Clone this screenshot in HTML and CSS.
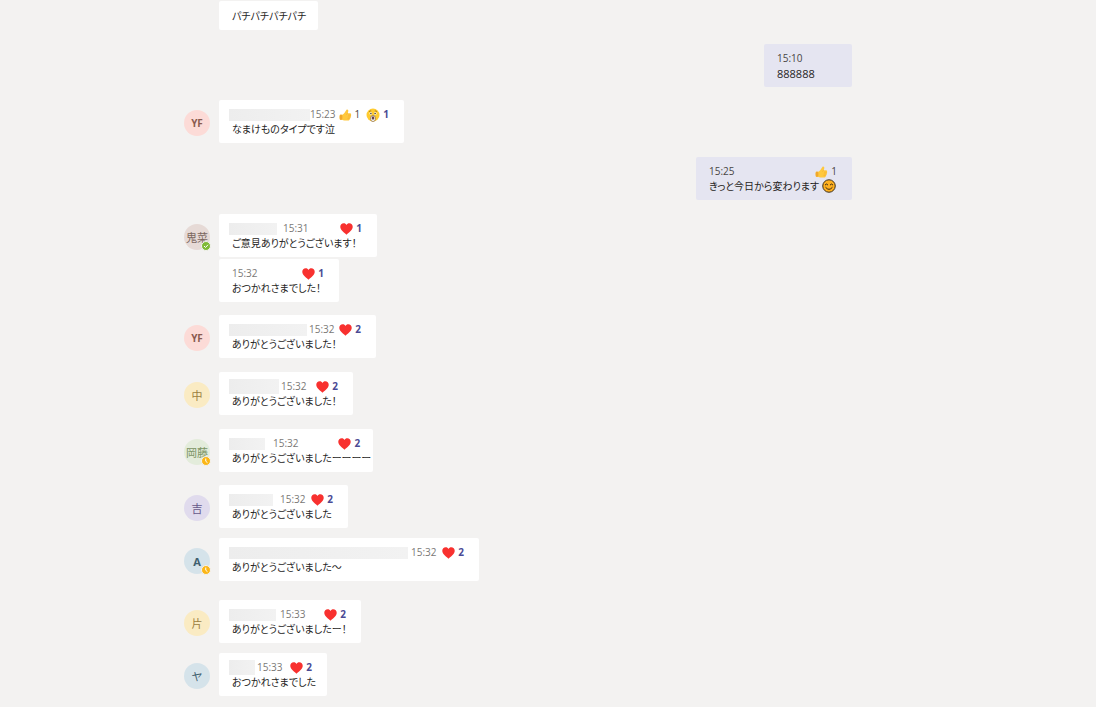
FILE: index.html
```
<!DOCTYPE html>
<html lang="ja">
<head>
    <meta charset="utf-8">
    <title>Chat</title>
    <link rel="stylesheet" href="styles.css">
</head>
<body>
    <svg class="sprite" aria-hidden="true">
        <symbol id="heart" viewBox="0 0 24 22">
            <path fill="#f8312f" d="M12 21.5C9 19 1 14 .5 7.500C.2 3 3.500.5 6.800.5C9.200.5 11 1.800 12 3.500C13 1.800 14.800.5 17.200.5C20.500.5 23.800 3 23.500 7.500C23 14 15 19 12 21.500Z"/>
        </symbol>
        <symbol id="thumb" viewBox="0 0 24 24">
            <path fill="#ffc83d" d="M14.500 1C16.500.3 18 2 17.500 4.500L16.500 8.500H21C23.500 8.500 24 11 22.700 12.200C23.800 13.500 23.400 15.300 22 16C22.600 17.500 21.800 19 20.500 19.400C20.600 21.500 19.500 23 17 23H10C8 23 6.500 22.200 5 21.500L1 21.500C0 18 0 14 1 11.500H5.500C8 10.500 11 7 12 4.500Z"/>
            <path fill="#f0a82c" d="M1 11.500H5C6 14.500 6 18 5 21.500H1C0 18 0 14 1 11.500Z"/>
            <path fill="none" stroke="#eda52b" d="M16.500 8.500L13.500 11M17 12.300H22.500M16.500 16H22M16 19.400H20.500"/>
        </symbol>
        <symbol id="surprised" viewBox="0 0 28 28">
            <circle cx="14" cy="14" r="13" fill="#ffcb2f"/>
            <path fill="none" stroke="#9a6a16" stroke-width="1.500" d="M6 7.500Q8 5 10.500 6M17.500 6Q20 5 22 7.500"/>
            <circle cx="9.500" cy="11" r="2.500" fill="#fff"/>
            <circle cx="18.500" cy="11" r="2.500" fill="#fff"/>
            <circle cx="9.800" cy="11" r="1.600" fill="#40342b"/>
            <circle cx="18.200" cy="11" r="1.600" fill="#40342b"/>
            <rect x="9.500" y="15" width="9" height="12" rx="4.500" fill="#fff" stroke="#8a6a4a" stroke-width="1.500"/>
            <ellipse cx="14" cy="20" rx="2.500" ry="3.500" fill="#65404a"/>
        </symbol>
        <symbol id="smile" viewBox="0 0 28 28">
            <circle cx="14" cy="14" r="12.500" fill="#ffb01f" stroke="#3b3020" stroke-width="2"/>
            <path fill="none" stroke="#3b2a14" stroke-width="2" stroke-linecap="round" d="M6.500 11.500Q9 8 11.500 11.500M16.500 11.500Q19 8 21.500 11.500M7.500 17Q14 25 20.500 17"/>
        </symbol>
        <symbol id="available" viewBox="0 0 20 20">
            <circle cx="10" cy="10" r="9" fill="#7fba35" stroke="#f3f2f1" stroke-width="2"/>
            <path fill="none" stroke="#fff" stroke-width="2" d="M6 10L9 13L14 7.500"/>
        </symbol>
        <symbol id="away" viewBox="0 0 20 20">
            <circle cx="10" cy="10" r="9" fill="#fbb616" stroke="#f3f2f1" stroke-width="2"/>
            <path fill="none" stroke="#fff" stroke-width="2" d="M9.500 5V10.500L13 13.500"/>
        </symbol>
    </svg>

    <main class="chat">
        <article class="message">
            <div class="bubble clap"><p>パチパチパチパチ</p></div>
        </article>

        <article class="message own">
            <div class="bubble short">
                <header><time>15:10</time></header>
                <p>888888</p>
            </div>
        </article>

        <article class="message close">
            <div class="avatar pink">YF</div>
            <div class="bubble m1523">
                <header>
                    <span class="name"></span><time>15:23</time>
                    <div class="reactions">
                        <button type="button" class="plain" aria-label="いいね 1"><svg><use href="#thumb"/></svg>1</button>
                        <button type="button" aria-label="びっくり 1"><svg class="face"><use href="#surprised"/></svg>1</button>
                    </div>
                </header>
                <p>なまけものタイプです泣</p>
            </div>
        </article>

        <article class="message own">
            <div class="bubble m1525">
                <header>
                    <time>15:25</time>
                    <div class="reactions">
                        <button type="button" class="plain" aria-label="いいね 1"><svg><use href="#thumb"/></svg>1</button>
                    </div>
                </header>
                <p>きっと今日から変わります<svg class="emoji"><use href="#smile"/></svg></p>
            </div>
        </article>

        <article class="message">
            <div class="avatar brown">鬼菜<svg class="status"><use href="#available"/></svg></div>
            <div class="bubble m1531">
                <header>
                    <span class="name"></span><time>15:31</time>
                    <div class="reactions">
                        <button type="button" aria-label="ハート 1"><svg><use href="#heart"/></svg>1</button>
                    </div>
                </header>
                <p>ご意見ありがとうございます！</p>
            </div>
        </article>

        <article class="message follow">
            <div class="bubble m1532">
                <header>
                    <time>15:32</time>
                    <div class="reactions">
                        <button type="button" aria-label="ハート 1"><svg><use href="#heart"/></svg>1</button>
                    </div>
                </header>
                <p>おつかれさまでした！</p>
            </div>
        </article>

        <article class="message close">
            <div class="avatar pink">YF</div>
            <div class="bubble from-yf">
                <header>
                    <span class="name"></span><time>15:32</time>
                    <div class="reactions">
                        <button type="button" aria-label="ハート 2"><svg><use href="#heart"/></svg>2</button>
                    </div>
                </header>
                <p>ありがとうございました！</p>
            </div>
        </article>

        <article class="message">
            <div class="avatar yellow">中</div>
            <div class="bubble from-naka">
                <header>
                    <span class="name"></span><time>15:32</time>
                    <div class="reactions">
                        <button type="button" aria-label="ハート 2"><svg><use href="#heart"/></svg>2</button>
                    </div>
                </header>
                <p>ありがとうございました！</p>
            </div>
        </article>

        <article class="message">
            <div class="avatar green">岡藤<svg class="status"><use href="#away"/></svg></div>
            <div class="bubble from-oka">
                <header>
                    <span class="name"></span><time>15:32</time>
                    <div class="reactions">
                        <button type="button" aria-label="ハート 2"><svg><use href="#heart"/></svg>2</button>
                    </div>
                </header>
                <p>ありがとうございましたーーーー</p>
            </div>
        </article>

        <article class="message close">
            <div class="avatar purple">吉</div>
            <div class="bubble from-yoshi">
                <header>
                    <span class="name"></span><time>15:32</time>
                    <div class="reactions">
                        <button type="button" aria-label="ハート 2"><svg><use href="#heart"/></svg>2</button>
                    </div>
                </header>
                <p>ありがとうございました</p>
            </div>
        </article>

        <article class="message closer">
            <div class="avatar blue"><b>A</b><svg class="status"><use href="#away"/></svg></div>
            <div class="bubble from-a">
                <header>
                    <span class="name"></span><time>15:32</time>
                    <div class="reactions">
                        <button type="button" aria-label="ハート 2"><svg><use href="#heart"/></svg>2</button>
                    </div>
                </header>
                <p>ありがとうございました～</p>
            </div>
        </article>

        <article class="message apart">
            <div class="avatar yellow">片</div>
            <div class="bubble from-kata">
                <header>
                    <span class="name"></span><time>15:33</time>
                    <div class="reactions">
                        <button type="button" aria-label="ハート 2"><svg><use href="#heart"/></svg>2</button>
                    </div>
                </header>
                <p>ありがとうございましたー！</p>
            </div>
        </article>

        <article class="message closer">
            <div class="avatar blue">ヤ</div>
            <div class="bubble from-ya">
                <header>
                    <span class="name"></span><time>15:33</time>
                    <div class="reactions">
                        <button type="button" aria-label="ハート 2"><svg><use href="#heart"/></svg>2</button>
                    </div>
                </header>
                <p>おつかれさまでした</p>
            </div>
        </article>
    </main>
</body>
</html>
```
FILE: styles.css
```
body {
    margin: 0;
    background: #f3f2f1;
    color: #252423;
    font-family: "Open Sans", "Noto Sans CJK JP", sans-serif;
    font-size: 10px;
    line-height: 15px;
}

.sprite {
    display: none;
}

.chat {
    display: flex;
    flex-direction: column;
    gap: 14px;
    padding: 1px 244px 9px 184px;
}

.message {
    display: flex;
    justify-content: flex-start;
    gap: 9px;
}

.message.own {
    justify-content: flex-end;
}

.message.follow {
    margin-top: -12px;
}

.message.close {
    margin-top: -1px;
}

.message.closer {
    margin-top: -4px;
}

.message.apart {
    margin-top: 5px;
}

/* messages without an avatar line up with the others */
.message:not(.own) .bubble:first-child {
    margin-left: 35px;
}

.avatar {
    position: relative;
    display: flex;
    align-items: center;
    justify-content: center;
    width: 26px;
    height: 26px;
    margin-top: 10px;
    border-radius: 50%;
    font-size: 11px;
    white-space: nowrap;
}

.pink { background: #fcdbd7; color: #8a5a4e; font-size: 10px; font-weight: 700; }
.brown { background: #e6dad6; color: #7b675f; }
.yellow { background: #faebc3; color: #9a8041; }
.green { background: #e3ecdb; color: #7b9464; }
.purple { background: #e0dbed; color: #67598a; }
.blue { background: #d5e3ea; color: #3f606f; }

.status {
    position: absolute;
    right: -1px;
    bottom: -1px;
    width: 10px;
    height: 10px;
}

.bubble {
    --name-width: 40px;
    --name-gap: 7px;
    box-sizing: border-box;
    padding: 7px 4px 6px 13px;
    border-radius: 2px;
    background: #fff;
}

.bubble p {
    margin: 0;
    font-feature-settings: "palt";
    white-space: nowrap;
}

.bubble header {
    display: flex;
    align-items: center;
    height: 15px;
}

.own .bubble {
    background: #e5e5f1;
}

.name {
    width: var(--name-width);
    height: 12px;
    margin-left: -3px;
    margin-right: var(--name-gap);
    background: linear-gradient(to right, #ededed, #f2f2f2);
}

time {
    color: #7a7876;
}

.own time {
    color: #484644;
}

.reactions {
    display: flex;
    gap: 6px;
    margin-left: auto;
    padding-right: 11px;
}

.reactions button {
    display: flex;
    align-items: center;
    gap: 3px;
    padding: 0;
    border: 0;
    background: none;
    color: #4b4a94;
    font: 700 10px/15px "Open Sans", sans-serif;
    cursor: pointer;
}

.reactions .plain {
    color: #484644;
    font-weight: 400;
}

.reactions svg {
    width: 13px;
    height: 12px;
}

.reactions .face {
    width: 14px;
    height: 14px;
}

.emoji {
    width: 14px;
    height: 14px;
    margin-left: 3px;
    vertical-align: -3px;
}

/* bubble widths and hidden names */
.clap { min-width: 99px; padding-top: 8px; }
.short { min-width: 88px; }
.short p { font-size: 11px; }
.m1523 { min-width: 185px; --name-width: 81px; --name-gap: 0; }
.m1525 { min-width: 156px; }
.m1531 { min-width: 158px; --name-width: 48px; --name-gap: 6px; }
.m1532 { min-width: 120px; }
.from-yf { min-width: 157px; --name-width: 78px; --name-gap: 2px; }
.from-naka { min-width: 134px; --name-width: 50px; --name-gap: 2px; }
.from-naka .name { height: 15px; }
.from-oka { min-width: 152px; padding-right: 2px; --name-width: 36px; --name-gap: 8px; }
.from-yoshi { min-width: 129px; --name-width: 44px; }
.from-a { min-width: 260px; --name-width: 179px; --name-gap: 3px; }
.from-kata { min-width: 142px; --name-width: 47px; --name-gap: 4px; }
.from-ya { min-width: 108px; --name-width: 26px; --name-gap: 2px; }
.from-ya .name { height: 15px; }
```
